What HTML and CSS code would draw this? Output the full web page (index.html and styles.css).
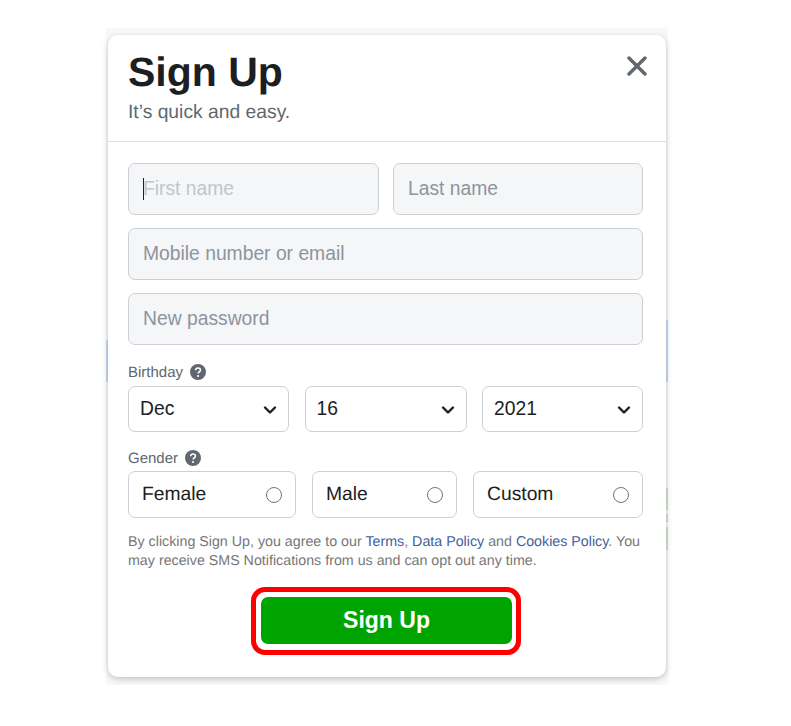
FILE: index.html
```html
<!DOCTYPE html>
<html lang="en">
<head>
    <meta charset="UTF-8">
    <meta name="viewport" content="width=device-width, initial-scale=1.0">
    <title>Sign Up</title>
    <link rel="stylesheet" href="styles.css">
</head>
<body>

<div class="backdrop">
    <span class="strip strip-blue-left"></span>
    <span class="strip strip-blue-right"></span>
    <span class="strip strip-green-1"></span>
    <span class="strip strip-green-2"></span>
    <span class="strip strip-green-3"></span>

    <div class="card">
        <div class="card-header">
            <div>
                <h2>Sign Up</h2>
                <p class="subtitle">It’s quick and easy.</p>
            </div>
            <svg class="close" viewBox="0 0 20 20" aria-label="Close">
                <path d="M2 2L18 18M18 2L2 18" fill="none" stroke="#606770" stroke-width="3.4" stroke-linecap="round"/>
            </svg>
        </div>

        <form class="card-body">
            <div class="name-row">
                <div class="input-wrap">
                    <input class="text-input focused" type="text" placeholder="First name">
                    <span class="caret"></span>
                </div>
                <input class="text-input" type="text" placeholder="Last name">
            </div>
            <input class="text-input" type="text" placeholder="Mobile number or email">
            <input class="text-input" type="password" placeholder="New password">

            <div class="field-label birthday-label">Birthday
                <svg class="help" viewBox="0 0 16 16"><circle cx="8" cy="8" r="8" fill="#606770"/><path d="M5.6 6.2C5.7 4.8 6.7 4 8 4c1.4 0 2.4.8 2.4 2 0 1-.6 1.5-1.3 2-.6.4-.9.7-.9 1.4" fill="none" stroke="#fff" stroke-width="1.6"/><circle cx="8.1" cy="12" r="1.1" fill="#fff"/></svg>
            </div>
            <div class="birthday-row">
                <div class="select-wrap">
                    <select><option>Dec</option></select>
                    <svg class="chevron" viewBox="0 0 14 10"><path d="M2 2.5L7 7.5L12 2.5" fill="none" stroke="#1c1e21" stroke-width="2.4" stroke-linecap="round" stroke-linejoin="round"/></svg>
                </div>
                <div class="select-wrap">
                    <select><option>16</option></select>
                    <svg class="chevron" viewBox="0 0 14 10"><path d="M2 2.5L7 7.5L12 2.5" fill="none" stroke="#1c1e21" stroke-width="2.4" stroke-linecap="round" stroke-linejoin="round"/></svg>
                </div>
                <div class="select-wrap">
                    <select><option>2021</option></select>
                    <svg class="chevron" viewBox="0 0 14 10"><path d="M2 2.5L7 7.5L12 2.5" fill="none" stroke="#1c1e21" stroke-width="2.4" stroke-linecap="round" stroke-linejoin="round"/></svg>
                </div>
            </div>

            <div class="field-label gender-label">Gender
                <svg class="help" viewBox="0 0 16 16"><circle cx="8" cy="8" r="8" fill="#606770"/><path d="M5.6 6.2C5.7 4.8 6.7 4 8 4c1.4 0 2.4.8 2.4 2 0 1-.6 1.5-1.3 2-.6.4-.9.7-.9 1.4" fill="none" stroke="#fff" stroke-width="1.6"/><circle cx="8.1" cy="12" r="1.1" fill="#fff"/></svg>
            </div>
            <div class="gender-row">
                <label class="gender-option"><span class="gender-name">Female</span> <input type="radio" name="gender"></label>
                <label class="gender-option"><span class="gender-name">Male</span> <input type="radio" name="gender"></label>
                <label class="gender-option"><span class="gender-name">Custom</span> <input type="radio" name="gender"></label>
            </div>

            <p class="terms">By clicking Sign Up, you agree to our <a href="#">Terms</a>, <a href="#">Data Policy</a> and <a href="#">Cookies Policy</a>. You<br>may receive SMS Notifications from us and can opt out any time.</p>

            <div class="button-row">
                <div class="highlight">
                    <button type="button" class="signup-button">Sign Up</button>
                </div>
            </div>
        </form>
    </div>
</div>

</body>
</html>
```

FILE: styles.css
```css
* {
    box-sizing: border-box;
}
body {
    font-family: "Liberation Sans", Arial, sans-serif;
    margin: 0;
    background-color: white;
    color: #1c1e21;
    text-rendering: geometricPrecision;
}
.backdrop {
    position: relative;
    width: 562px;
    height: 657px;
    margin: 28px 0 0 106px;
    padding: 7px 2px 8px;
    background-color: #f7f8f8;
}
.strip {
    position: absolute;
    width: 2px;
}
.strip-blue-left {
    left: 0;
    top: 312px;
    height: 42px;
    background-color: #c9d9f0;
}
.strip-blue-right {
    right: 0;
    top: 292px;
    height: 62px;
    background-color: #c9d9f0;
}
.strip-green-1 {
    right: 0;
    top: 460px;
    height: 22px;
    background-color: #cfe5cc;
}
.strip-green-2 {
    right: 0;
    top: 486px;
    height: 8px;
    background-color: #cfe5cc;
}
.strip-green-3 {
    right: 0;
    top: 499px;
    height: 23px;
    background-color: #cfe5cc;
}
.card {
    position: relative;
    height: 642px;
    background: white;
    border-radius: 10px;
    box-shadow: 0 2px 6px rgba(0, 0, 0, 0.22);
}
.card-header {
    display: flex;
    justify-content: space-between;
    height: 107px;
    padding: 13px 19px 0 20px;
    border-bottom: 1px solid #dadde1;
}
h2 {
    margin: 0;
    font-size: 41px;
    line-height: 48px;
    font-weight: bold;
}
.subtitle {
    margin: 5px 0 0;
    font-size: 19.3px;
    line-height: 24px;
    color: #606770;
}
.close {
    width: 20px;
    height: 20px;
    margin-top: 8px;
}
.card-body {
    padding: 21px 23px 0 20px;
}
.name-row {
    display: grid;
    grid-template-columns: 251px 250px;
    gap: 14px;
    margin-bottom: 13px;
}
.input-wrap {
    position: relative;
}
.name-row .text-input {
    margin-bottom: 0;
}
.text-input {
    display: block;
    width: 100%;
    height: 52px;
    margin-bottom: 13px;
    padding: 0 14px;
    font-family: inherit;
    font-size: 19.3px;
    color: #1c1e21;
    background-color: #f5f6f7;
    border: 1px solid #ccd0d5;
    border-radius: 7px;
}
.text-input::placeholder {
    color: #8d949e;
    opacity: 1;
}
.text-input.focused::placeholder {
    color: #c2c5ca;
}
.caret {
    position: absolute;
    left: 15px;
    top: 15px;
    width: 1px;
    height: 22px;
    background-color: #1c1e21;
}
.field-label {
    display: flex;
    align-items: center;
    gap: 7px;
    height: 18px;
    padding-top: 1px;
    font-size: 15px;
    color: #606770;
}
.birthday-label {
    margin-top: 18px;
    margin-bottom: 5px;
}
.gender-label {
    margin-top: 17px;
    margin-bottom: 4px;
}
.help {
    width: 16px;
    height: 16px;
    margin-top: -1px;
}
.birthday-row {
    display: grid;
    grid-template-columns: 161px 162px 161px;
    justify-content: space-between;
}
.select-wrap {
    position: relative;
}
select {
    display: block;
    width: 100%;
    height: 46px;
    padding: 0 11px 2px;
    font-family: inherit;
    font-size: 19.3px;
    color: #1c1e21;
    background-color: white;
    border: 1px solid #ccd0d5;
    border-radius: 7px;
    appearance: none;
}
.chevron {
    position: absolute;
    right: 12px;
    top: 19px;
    width: 14px;
    height: 10px;
}
.gender-row {
    display: grid;
    grid-template-columns: 168px 145px 170px;
    justify-content: space-between;
}
.gender-option {
    display: flex;
    align-items: center;
    justify-content: space-between;
    height: 47px;
    padding: 0 13px;
    font-size: 19.3px;
    border: 1px solid #ccd0d5;
    border-radius: 7px;
}
.gender-name {
    margin-top: 1px;
}
.gender-option input {
    width: 16px;
    height: 16px;
    margin: 0;
    appearance: none;
    background: white;
    border: 1.5px solid #757575;
    border-radius: 50%;
}
.terms {
    margin: 15px 0 0;
    font-size: 14.25px;
    line-height: 19px;
    color: #777;
}
.terms a {
    color: #43619c;
    text-decoration: none;
}
.button-row {
    display: flex;
    justify-content: center;
    margin-top: 16px;
    padding-left: 1px;
}
.highlight {
    width: 270px;
    height: 68px;
    padding: 5px 4px 5px 5px;
    border: 5px solid #ff0000;
    border-radius: 14px;
}
.signup-button {
    display: block;
    width: 251px;
    height: 47px;
    font-family: inherit;
    font-size: 23px;
    font-weight: bold;
    color: white;
    background-color: #00a400;
    border: none;
    border-radius: 7px;
}
```
